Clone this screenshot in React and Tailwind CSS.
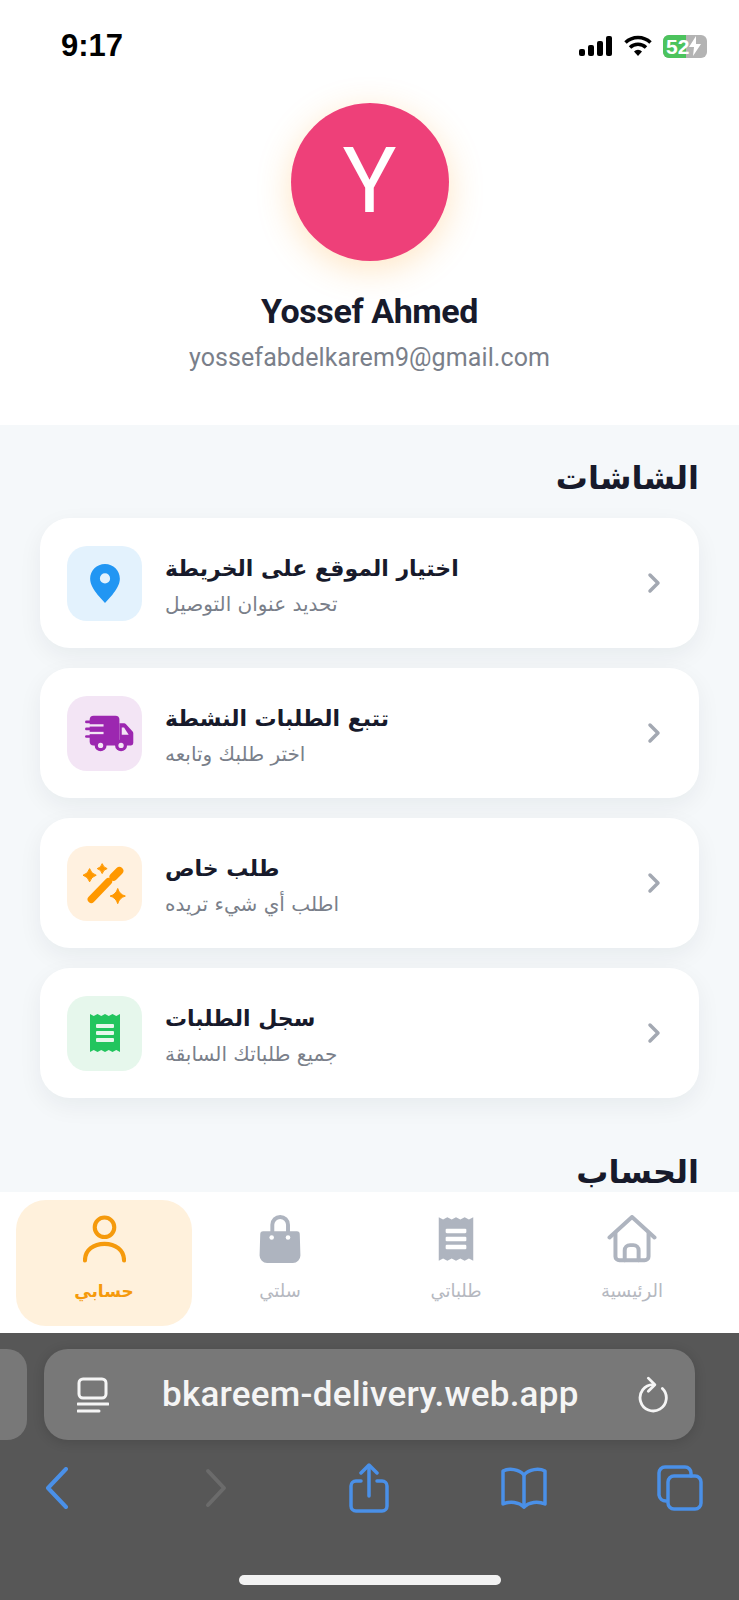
const cardFont = { fontFamily: '"DejaVu Sans", sans-serif' };

function PinIcon() {
  return (
    <svg width="30" height="39" viewBox="0 0 32 42">
      <path fillRule="evenodd" fill="#2196f3" d="M16 0C7 0 0 7 0 16c0 6 4 12 8 17l8 9 8-9c4-5 8-11 8-17C32 7 25 0 16 0Zm0 21a5.500 5.500 0 1 1 0-11 5.500 5.500 0 0 1 0 11Z" />
    </svg>
  );
}

function TruckIcon() {
  return (
    <svg className="ml-[10px]" width="49" height="37" viewBox="46 80 148 112" fill="#9c27b0">
      <rect x="60" y="82" width="90" height="90" rx="12" />
      <path d="M150 105h14a8 8 0 0 1 6 3l20 22a8 8 0 0 1 2 5v30a7 7 0 0 1-7 7h-35Z" />
      <path d="M157 118h7l14 22h-21Z" fill="#f3e5f5" />
      <rect x="46" y="108" width="56" height="7" fill="#f3e5f5" />
      <rect x="46" y="131" width="56" height="7" fill="#f3e5f5" />
      <rect x="46" y="97" width="50" height="8" rx="4" />
      <rect x="46" y="118" width="44" height="8" rx="4" />
      <rect x="46" y="141" width="36" height="8" rx="4" />
      <circle cx="93" cy="172" r="18" />
      <circle cx="155" cy="172" r="18" />
      <circle cx="93" cy="172" r="8" fill="#f3e5f5" />
      <circle cx="155" cy="172" r="8" fill="#f3e5f5" />
    </svg>
  );
}

function Star({ x, y, r }) {
  const k = r * 0.22;
  return (
    <path
      strokeWidth="3"
      strokeLinejoin="round"
      stroke="#ff9800"
      d={`M${x} ${y - r}Q${x + k} ${y - k} ${x + r} ${y}Q${x + k} ${y + k} ${x} ${y + r}Q${x - k} ${y + k} ${x - r} ${y}Q${x - k} ${y - k} ${x} ${y - r}Z`}
    />
  );
}

function WandIcon() {
  return (
    <svg width="47" height="43" viewBox="40 45 140 130" fill="#ff9800">
      <path d="M70 158L122 104" fill="none" stroke="#ff9800" strokeWidth="22" strokeLinecap="round" />
      <path d="M137 90L155 72" fill="none" stroke="#ff9800" strokeWidth="24" strokeLinecap="round" />
      <Star x={65} y={85} r={20} />
      <Star x={103} y={65} r={15} />
      <Star x={150} y={148} r={23} />
    </svg>
  );
}

function ReceiptIcon({ color, stripe, w = 30, h = 40 }) {
  return (
    <svg width={w} height={h} viewBox="0 0 30 40">
      <path fill={color} d="M0 1l3.750 2L7.500 1l3.750 2L15 1l3.750 2L22.500 1l3.750 2L30 1v38l-3.750-2-3.750 2-3.750-2L15 39l-3.750-2L7.500 39l-3.750-2L0 39Z" />
      <rect x="6" y="11" width="18" height="4" rx="1" fill={stripe} />
      <rect x="6" y="18" width="18" height="4" rx="1" fill={stripe} />
      <rect x="6" y="25" width="18" height="4" rx="1" fill={stripe} />
    </svg>
  );
}

function HomeIcon() {
  return (
    <svg width="50" height="48" viewBox="45 30 150 145" fill="none" stroke="#aeb4bf" strokeWidth="12" strokeLinejoin="round" strokeLinecap="round">
      <path d="M52 98L120 36l68 62" />
      <path d="M70 85v70a12 12 0 0 0 12 12h76a12 12 0 0 0 12-12V85" />
      <path d="M98 167v-30a16 16 0 0 1 16-16h10a16 16 0 0 1 16 16v30" />
    </svg>
  );
}

function BagIcon() {
  return (
    <svg width="42" height="49" viewBox="60 18 127 150">
      <path fill="none" stroke="#aeb4bf" strokeWidth="12" d="M100 72V48a24 24 0 0 1 48 0v24" />
      <path fill="#aeb4bf" d="M72 68h103a9 9 0 0 1 9 9l2 65a23 23 0 0 1-23 23H84a23 23 0 0 1-23-23l2-65a9 9 0 0 1 9-9Z" />
      <circle cx="98" cy="87" r="7" fill="#fff" />
      <circle cx="148" cy="87" r="7" fill="#fff" />
    </svg>
  );
}

function UserIcon() {
  return (
    <svg width="43" height="48" viewBox="0 0 44 48" fill="none" stroke="#f59a0c" strokeWidth="4.200" strokeLinecap="round">
      <circle cx="22" cy="12" r="10" />
      <path d="M2 46c0-11 9-17 20-17s20 6 20 17" />
    </svg>
  );
}

function MenuRow({ tile, icon, title, sub }) {
  return (
    <div className="flex h-[130px] items-center rounded-[30px] bg-white pl-[27px] pr-[38px] shadow-[0_8px_24px_rgba(20,30,50,0.06)]">
      <div className={`flex h-[75px] w-[75px] shrink-0 items-center justify-center rounded-[20px] ${tile}`}>{icon}</div>
      <div dir="rtl" className="ml-[23px] flex-1 pt-[4px] text-left" style={cardFont}>
        <div className="text-[22px] leading-[34px] font-bold text-[#171a2b]">{title}</div>
        <div className="mt-[4px] text-[20px] leading-[28px] text-[#7a7f8a]">{sub}</div>
      </div>
      <svg width="14" height="22" viewBox="0 0 14 22" fill="none" stroke="#a3a8b2" strokeWidth="3.500" strokeLinecap="round" strokeLinejoin="round">
        <path d="M3 3l8 8-8 8" />
      </svg>
    </div>
  );
}

function NavItem({ icon, label, active }) {
  return (
    <div className={`flex h-[126px] w-[176px] flex-col items-center rounded-[30px] pt-[11px] ${active ? 'bg-[#fff1dc]' : ''}`}>
      <div className="flex h-[56px] items-center">{icon}</div>
      <div dir="rtl" className={`mt-[12px] leading-[24px] ${active ? 'text-[17px] font-bold text-[#f59a0c]' : 'text-[18px] text-[#b5b8bf]'}`} style={cardFont}>
        {label}
      </div>
    </div>
  );
}

export default function App() {
  return (
    <div className="flex h-[1600px] w-[739px] flex-col overflow-hidden bg-white font-['Roboto',sans-serif]">
      <div className="flex h-[90px] shrink-0 items-center justify-between pl-[61px] pr-[32px] pt-[2px]">
        <span className="font-['Liberation_Sans',sans-serif] text-[31px] font-bold text-black">9:17</span>
        <div className="flex items-center gap-[11px]">
          <svg width="34" height="20" viewBox="0 0 34 20" fill="#000">
            <rect x="0" y="13" width="6" height="7" rx="2" />
            <rect x="9" y="9" width="6" height="11" rx="2" />
            <rect x="18" y="5" width="6" height="15" rx="2" />
            <rect x="27" y="0" width="6" height="20" rx="2" />
          </svg>
          <svg width="28" height="22" viewBox="0 0 28 22" fill="none" stroke="#000" strokeWidth="3.500">
            <path d="M1.500 7.500a18 18 0 0 1 25 0" />
            <path d="M6 12.500a11.500 11.500 0 0 1 16 0" />
            <path d="M14 21l-4-4.500a5.500 5.500 0 0 1 8 0Z" fill="#000" stroke="none" />
          </svg>
          <div className="relative flex h-[23px] w-[44px] items-center overflow-hidden rounded-[6px] bg-[#b3b3b3] pl-[3px] font-['Liberation_Sans',sans-serif] text-[21px] font-bold leading-none text-white">
            <div className="absolute inset-y-0 left-0 w-[23px] bg-[#4cc35d]" />
            <span className="relative">52</span>
            <svg className="relative" width="12" height="20" viewBox="0 0 12 20" fill="#fff"><path d="M7 0L0 11h5l-1 9 8-12H7Z" /></svg>
          </div>
        </div>
      </div>

      <div className="flex h-[335px] shrink-0 flex-col items-center pt-[13px]">
        <div className="flex h-[158px] w-[158px] items-center justify-center rounded-full bg-[#ee4079] text-[90px] font-normal leading-none text-white shadow-[0_8px_34px_rgba(255,160,40,0.28)]">
          Y
        </div>
        <div className="mt-[30px] text-[34px] leading-[40px] font-bold text-[#171a2b] tracking-[-0.4px]">Yossef Ahmed</div>
        <div className="mt-[11px] text-[25px] leading-[32px] text-[#7a7f8a] tracking-[0.1px]">yossefabdelkarem9@gmail.com</div>
      </div>

      <div className="min-h-0 flex-1 overflow-hidden bg-[#f5f8fa] px-[40px] pt-[29px]">
        <div dir="rtl" className="text-[32px] leading-[48px] font-bold text-[#171a2b]" style={cardFont}>الشاشات</div>
        <div className="mt-[16px] flex flex-col gap-[20px]">
          <MenuRow tile="bg-[#e3f2fd]" icon={<PinIcon />} title="اختيار الموقع على الخريطة" sub="تحديد عنوان التوصيل" />
          <MenuRow tile="bg-[#f3e5f5]" icon={<TruckIcon />} title="تتبع الطلبات النشطة" sub="اختر طلبك وتابعه" />
          <MenuRow tile="bg-[#fff1e0]" icon={<WandIcon />} title="طلب خاص" sub="اطلب أي شيء تريده" />
          <MenuRow tile="bg-[#e6f7ec]" icon={<ReceiptIcon color="#22c55e" stripe="#e6f7ec" />} title="سجل الطلبات" sub="جميع طلباتك السابقة" />
        </div>
        <div dir="rtl" className="mt-[50px] text-[32px] leading-[48px] font-bold text-[#171a2b]" style={cardFont}>الحساب</div>
      </div>

      <div className="relative flex h-[141px] shrink-0 items-start bg-white px-[16px] pt-[8px]">
        <NavItem active icon={<UserIcon />} label="حسابي" />
        <NavItem icon={<BagIcon />} label="سلتي" />
        <NavItem icon={<ReceiptIcon color="#aeb4bf" stripe="#fff" w={36} h={46} />} label="طلباتي" />
        <NavItem icon={<HomeIcon />} label="الرئيسية" />
      </div>

      <div className="flex h-[267px] shrink-0 flex-col bg-[#575757]">
        <div className="mt-[16px] flex h-[91px] gap-[17px]">
          <div className="h-full w-[27px] rounded-r-[20px] bg-[#787878]" />
          <div className="flex h-full w-[651px] items-center rounded-[24px] bg-[#787878] pl-[33px] pr-[27px] shadow-[0_2px_12px_rgba(0,0,0,0.15)]">
            <svg width="32" height="36" viewBox="0 0 32 36" fill="none" stroke="#f5f5f5" strokeWidth="3" strokeLinecap="round">
              <rect x="2" y="2" width="27" height="19" rx="4" />
              <path d="M1 27h30" />
              <path d="M1 34h21" />
            </svg>
            <span className="ml-[53px] flex-1 text-[35px] font-medium leading-none tracking-[0.25px] text-[#f5f5f5]">bkareem-delivery.web.app</span>
            <svg width="30" height="38" viewBox="0 0 32 38" fill="none" stroke="#f5f5f5" strokeWidth="3" strokeLinecap="round" strokeLinejoin="round">
              <path d="M16 8a14 14 0 1 0 10 4" />
              <path d="M11 1l7 7-7 7" />
            </svg>
          </div>
        </div>

        <div className="flex items-center justify-between pl-[33px] pr-[35px] pt-[23px]">
          <div className="flex w-[48px] justify-center">
            <svg width="24" height="42" viewBox="0 0 24 42" fill="none" stroke="#4a90e8" strokeWidth="4" strokeLinecap="round" strokeLinejoin="round"><path d="M21 2L3 21l18 19" /></svg>
          </div>
          <div className="flex w-[48px] justify-center pl-[8px]">
            <svg width="24" height="42" viewBox="0 0 24 42" fill="none" stroke="#6b6b6b" strokeWidth="4" strokeLinecap="round" strokeLinejoin="round"><path d="M3 4l16 17L3 38" /></svg>
          </div>
          <div className="flex w-[48px] justify-center">
            <svg width="40" height="50" viewBox="0 0 40 50" fill="none" stroke="#4a90e8" strokeWidth="3.500" strokeLinecap="round" strokeLinejoin="round">
              <path d="M12 18H7a5 5 0 0 0-5 5v20a5 5 0 0 0 5 5h26a5 5 0 0 0 5-5V23a5 5 0 0 0-5-5h-5" />
              <path d="M20 33V3" />
              <path d="M12 10l8-8 8 8" />
            </svg>
          </div>
          <div className="flex w-[48px] justify-center">
            <svg width="48" height="42" viewBox="0 0 48 42" fill="none" stroke="#4a90e8" strokeWidth="3.500" strokeLinecap="round" strokeLinejoin="round">
              <path d="M24 8C19 2 9 1 3 4v33c7-3 16-2 21 3 5-5 14-6 21-3V4c-6-3-16-2-21 4Z" />
              <path d="M24 8v32" />
            </svg>
          </div>
          <div className="flex w-[48px] justify-center">
            <svg width="48" height="46" viewBox="0 0 46 46" fill="none" stroke="#4a90e8" strokeWidth="3.500" strokeLinecap="round" strokeLinejoin="round">
              <path d="M9 36a7 7 0 0 1-7-6V8a6 6 0 0 1 6-6h20a6 6 0 0 1 6 6v3" />
              <rect x="11" y="11" width="33" height="33" rx="6" />
            </svg>
          </div>
        </div>

        <div className="mt-auto mb-[15px] h-[10px] w-[262px] self-center rounded-full bg-[#f2f2f2]" />
      </div>
    </div>
  );
}
